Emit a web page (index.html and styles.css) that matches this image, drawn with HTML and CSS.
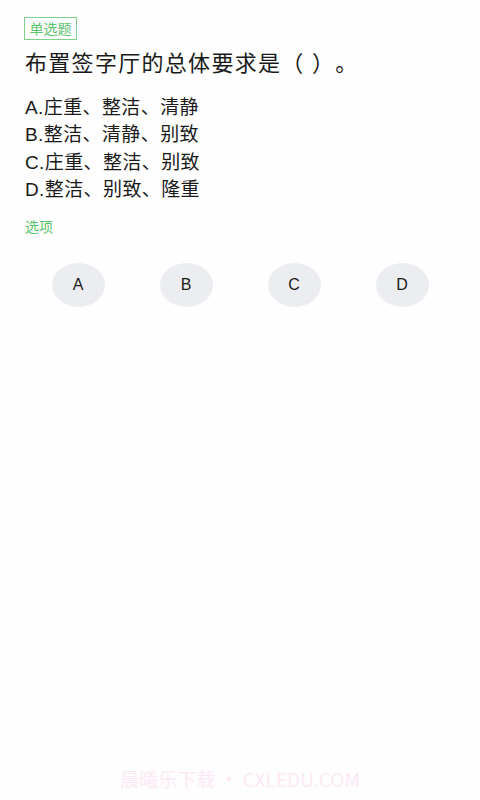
FILE: index.html
```html
<!DOCTYPE html>
<html lang="zh">
<head>
<meta charset="utf-8">
<link rel="stylesheet" href="styles.css">
</head>
<body>
<div class="page">
  <div class="tag">单选题</div>
  <h1 class="title">布置签字厅的总体要求是（ ）。</h1>
  <ul class="options">
    <li>A.庄重、整洁、清静</li>
    <li>B.整洁、清静、别致</li>
    <li>C.庄重、整洁、别致</li>
    <li>D.整洁、别致、隆重</li>
  </ul>
  <div class="label">选项</div>
  <div class="choices">
    <div class="choice"><span class="bubble">A</span></div>
    <div class="choice"><span class="bubble">B</span></div>
    <div class="choice"><span class="bubble">C</span></div>
    <div class="choice"><span class="bubble">D</span></div>
  </div>
  <div class="watermark">晨曦乐下载 • CXLEDU.COM</div>
</div>
</body>
</html>
```
FILE: styles.css
```css
html, body {
  margin: 0;
  padding: 0;
  background: #fefefe;
}
body {
  font-family: "Noto Sans CJK SC", "Liberation Sans", sans-serif;
  color: #1a1a1a;
}
.page {
  position: relative;
  width: 480px;
  height: 800px;
  box-sizing: border-box;
  padding: 15px 24px 0 24px;
}
.tag {
  display: inline-flex;
  align-items: center;
  justify-content: center;
  box-sizing: border-box;
  width: 53px;
  height: 23px;
  border: 1.5px solid #7fd08c;
  color: #5cc46e;
  font-size: 14px;
  line-height: 1;
}
.title {
  margin: 9px 0 0 1px;
  font-family: "Liberation Sans", "Noto Sans CJK SC", sans-serif;
  font-size: 22px;
  font-weight: 400;
  line-height: 30px;
  letter-spacing: 1.3px;
  text-spacing-trim: space-all;
}
.options {
  list-style: none;
  margin: 15px 0 0 1px;
  padding: 0;
  font-family: "Liberation Sans", "Noto Sans CJK SC", sans-serif;
  font-size: 19px;
  line-height: 27.5px;
  letter-spacing: 0.4px;
}
.label {
  margin: 12px 0 0 1px;
  color: #5cc46e;
  font-size: 14px;
  line-height: 20px;
}
.choices {
  display: grid;
  grid-template-columns: repeat(4, 1fr);
  margin-top: 27px;
}
.choice {
  display: flex;
  justify-content: center;
}
.bubble {
  display: flex;
  align-items: center;
  justify-content: center;
  width: 53px;
  height: 44px;
  border-radius: 50%;
  background: #ecedf0;
  font-family: "Liberation Sans", sans-serif;
  font-size: 16px;
  color: #1a1a1a;
}
.watermark {
  position: absolute;
  left: 0;
  right: 0;
  top: 765px;
  text-align: center;
  font-family: "Noto Sans CJK SC", sans-serif;
  font-size: 19px;
  color: #fde9f5;
}
```
